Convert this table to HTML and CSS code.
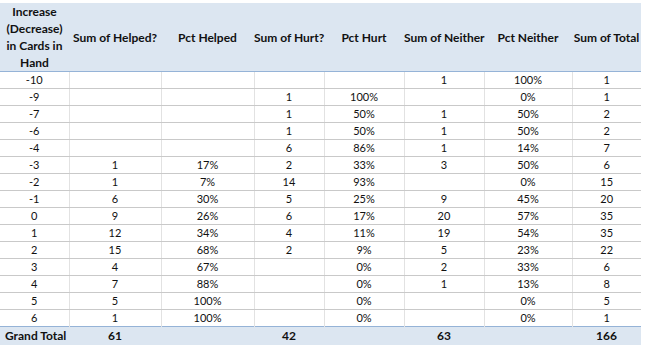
FILE: index.html
```html
<!DOCTYPE html>
<html>
<head>
<meta charset="utf-8">
<link rel="stylesheet" href="styles.css">
</head>
<body>
<table class="pivot">
  <colgroup>
    <col class="c1"><col class="c2"><col class="c3"><col class="c4"><col class="c5"><col class="c6"><col class="c7"><col class="c8">
  </colgroup>
  <thead>
    <tr>
      <th class="wrap">Increase (Decrease) in Cards in Hand</th>
      <th>Sum of Helped?</th>
      <th>Pct Helped</th>
      <th>Sum of Hurt?</th>
      <th>Pct Hurt</th>
      <th>Sum of Neither</th>
      <th>Pct Neither</th>
      <th>Sum of Total</th>
    </tr>
  </thead>
  <tbody>
    <tr><td>-10</td><td></td><td></td><td></td><td></td><td>1</td><td>100%</td><td>1</td></tr>
    <tr><td>-9</td><td></td><td></td><td>1</td><td>100%</td><td></td><td>0%</td><td>1</td></tr>
    <tr><td>-7</td><td></td><td></td><td>1</td><td>50%</td><td>1</td><td>50%</td><td>2</td></tr>
    <tr><td>-6</td><td></td><td></td><td>1</td><td>50%</td><td>1</td><td>50%</td><td>2</td></tr>
    <tr><td>-4</td><td></td><td></td><td>6</td><td>86%</td><td>1</td><td>14%</td><td>7</td></tr>
    <tr><td>-3</td><td>1</td><td>17%</td><td>2</td><td>33%</td><td>3</td><td>50%</td><td>6</td></tr>
    <tr><td>-2</td><td>1</td><td>7%</td><td>14</td><td>93%</td><td></td><td>0%</td><td>15</td></tr>
    <tr><td>-1</td><td>6</td><td>30%</td><td>5</td><td>25%</td><td>9</td><td>45%</td><td>20</td></tr>
    <tr><td>0</td><td>9</td><td>26%</td><td>6</td><td>17%</td><td>20</td><td>57%</td><td>35</td></tr>
    <tr><td>1</td><td>12</td><td>34%</td><td>4</td><td>11%</td><td>19</td><td>54%</td><td>35</td></tr>
    <tr><td>2</td><td>15</td><td>68%</td><td>2</td><td>9%</td><td>5</td><td>23%</td><td>22</td></tr>
    <tr><td>3</td><td>4</td><td>67%</td><td></td><td>0%</td><td>2</td><td>33%</td><td>6</td></tr>
    <tr><td>4</td><td>7</td><td>88%</td><td></td><td>0%</td><td>1</td><td>13%</td><td>8</td></tr>
    <tr><td>5</td><td>5</td><td>100%</td><td></td><td>0%</td><td></td><td>0%</td><td>5</td></tr>
    <tr><td>6</td><td>1</td><td>100%</td><td></td><td>0%</td><td></td><td>0%</td><td>1</td></tr>
  </tbody>
  <tfoot>
    <tr>
      <td class="label">Grand Total</td><td>61</td><td></td><td>42</td><td></td><td>63</td><td></td><td>166</td>
    </tr>
  </tfoot>
</table>
</body>
</html>
```

FILE: styles.css
```css
html, body {
  margin: 0;
  padding: 0;
  background: #ffffff;
}

body {
  padding-top: 3px;
  font-family: Lato, "Liberation Sans", sans-serif;
  color: #1a1a1a;
}

.pivot {
  border-collapse: collapse;
  table-layout: fixed;
  width: 641px;
  font-size: 11px;
}

.c1 { width: 69px; }
.c2 { width: 92px; }
.c3 { width: 93px; }
.c4 { width: 70px; }
.c5 { width: 80px; }
.c6 { width: 80px; }
.c7 { width: 88px; }
.c8 { width: 69px; }

.pivot thead th {
  background: #dce6f1;
  height: 68px;
  padding: 0;
  font-weight: bold;
  font-size: 12px;
  line-height: 17px;
  color: #111;
  text-align: center;
  vertical-align: middle;
  white-space: nowrap;
  border-bottom: 1px solid #95b3d7;
}

.pivot thead th.wrap {
  white-space: normal;
  padding: 0 2px;
}

.pivot tbody td {
  height: 16px;
  padding: 0;
  line-height: 16px;
  text-align: center;
  color: #111;
  border-bottom: 1px solid #c9c9c9;
  border-right: 1px solid #e2e2e2;
}

.pivot tbody td:last-child {
  border-right: none;
}

.pivot tbody tr:last-child td {
  border-bottom: none;
}

.pivot tfoot td {
  background: #dce6f1;
  height: 18px;
  padding: 0;
  line-height: 18px;
  font-weight: bold;
  font-size: 12px;
  color: #111;
  text-align: center;
  border-top: 1px solid #95b3d7;
}

.pivot tfoot td.label {
  text-align: left;
  padding-left: 5px;
}
```
